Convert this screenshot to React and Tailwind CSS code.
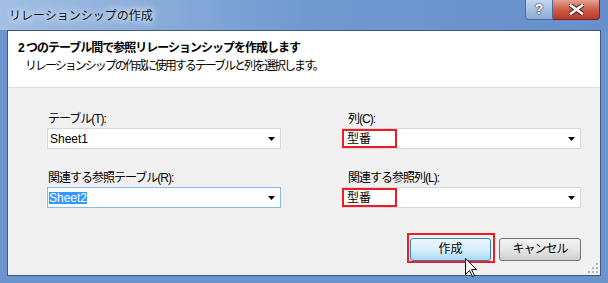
const ui = "font-['Liberation_Sans','Noto_Sans_CJK_JP',sans-serif]"

function Combo({ value, selected, focused, marked, inset }) {
  return (
    <div
      className={`relative flex items-center h-[21px] bg-white border ${
        focused ? 'border-[#8cbbe8]' : 'border-[#d7d7d7]'
      } ${inset}`}
    >
      {selected ? (
        <span className="bg-[#3399ff] text-white leading-[12px] h-[12px]">{value}</span>
      ) : (
        <span className="leading-[14px]">{value}</span>
      )}
      <svg className="ml-auto mr-[5px]" width="7" height="4" viewBox="0 0 7 4">
        <path d="M0 0h7L3.5 4z" fill="#000" />
      </svg>
      {marked && (
        <span className="absolute left-[-1px] top-0 w-[55px] h-[19px] border-2 border-[#ee1c25]" />
      )}
    </div>
  )
}

function Field({ label, labelInset, ...rest }) {
  return (
    <div className="flex flex-col">
      <div className={`h-[16px] leading-[16px] tracking-[-1px] mb-[1px] ${labelInset}`}>{label}</div>
      <Combo {...rest} />
    </div>
  )
}

export default function App() {
  return (
    <div className={`w-[608px] h-[283px] flex flex-col bg-[#6a94cb] text-[12px] text-black ${ui}`}>
      <div className="h-[30px] flex items-start bg-gradient-to-r from-[#a3c0e4] via-[#7099d0] to-[#6790cb]">
        <div className="pl-[9px] pt-[8px] leading-[16px] text-[12px] text-[#111] [text-shadow:0_0_6px_#fff,0_0_10px_#fff]">
          リレーションシップの作成
        </div>
        <div className="ml-auto mr-[8px] flex">
          <div className="w-[28px] h-[20px] flex items-center justify-center rounded-bl-[4px] border border-[#4c6c97] border-t-0 bg-gradient-to-b from-[#c7d8ee] via-[#a9c1e3] to-[#8aa9d6] text-white font-bold text-[14px] [text-shadow:0_0_1px_#223,0_0_2px_#223]">
            ?
          </div>
          <div className="w-[47px] h-[20px] flex items-center justify-center rounded-br-[4px] border border-[#6b2a22] border-t-0 border-l-0 bg-gradient-to-b from-[#e3a291] via-[#cf5a47] to-[#b9382a]">
            <svg width="15" height="11" viewBox="0 0 15 11">
              <path d="M2 1.5L13 9.5M13 1.5L2 9.5" stroke="#4a1a14" strokeWidth="4.5" strokeLinecap="square" />
              <path d="M2 1.5L13 9.5M13 1.5L2 9.5" stroke="#fff" strokeWidth="2.6" strokeLinecap="square" />
            </svg>
          </div>
        </div>
      </div>

      <div className="mx-[7px] h-[246px] flex flex-col border border-[#3d5a80] bg-[#f0f0f0]">
        <div className="h-[57px] bg-white border-b border-[#dcdcdc] flex flex-col">
          <div className="pl-[10px] pt-[9px] leading-[16px] font-bold tracking-[-1px]">
            2 つのテーブル間で参照リレーションシップを作成します
          </div>
          <div className="pl-[17px] pt-[2px] leading-[16px] tracking-[-2px]">
            リレーションシップの作成に使用するテーブルと列を選択します。
          </div>
        </div>

        <div className="relative flex-1 flex flex-col pt-[23px]">
          <div className="flex pl-[39px]">
            <div className="w-[234px] flex flex-col gap-[21px]">
              <Field label="テーブル(T):" labelInset="pl-[1px]" value="Sheet1" inset="pl-[2px]" />
              <Field label="関連する参照テーブル(R):" labelInset="pl-[1px]" value="Sheet2" inset="pl-[1px]" selected focused />
            </div>
            <div className="ml-[61px] w-[239px] flex flex-col gap-[21px]">
              <Field label="列(C):" labelInset="pl-[6px]" value="型番" inset="pl-[4px]" marked />
              <Field label="関連する参照列(L):" labelInset="pl-[6px]" value="型番" inset="pl-[4px]" marked />
            </div>
          </div>

          <div className="mt-[30px] flex justify-end gap-[8px] pr-[19px]">
            <div className="relative">
              <button className="w-[81px] h-[23px] rounded-[3px] border border-[#3c7fb1] bg-gradient-to-b from-[#eaf6fd] via-[#d9f0fc] to-[#a7d9f5] leading-[21px] text-center">
                作成
              </button>
              <span className="absolute left-[-3px] right-[-4px] top-[-5px] bottom-[-2px] border-2 border-[#ee1c25]" />
              <svg className="absolute left-[55px] top-[20px]" width="12" height="19" viewBox="0 0 12 19">
                <path d="M0.5 0.5V16.5L4.5 12.5L7.5 18.5L9.5 17.5L6.5 11.5H11.5Z" fill="#fff" stroke="#000" />
              </svg>
            </div>
            <button className="w-[82px] h-[23px] rounded-[3px] border border-[#707070] bg-gradient-to-b from-[#f2f2f2] via-[#e6e6e6] to-[#cfcfcf] leading-[21px] text-center tracking-[-1px]">
              キャンセル
            </button>
          </div>

          <svg className="absolute right-[2px] bottom-[2px]" width="10" height="10" viewBox="0 0 10 10">
            <g fill="#b8b8b8">
              <rect x="8" y="0" width="2" height="2" />
              <rect x="4" y="4" width="2" height="2" />
              <rect x="8" y="4" width="2" height="2" />
              <rect x="0" y="8" width="2" height="2" />
              <rect x="4" y="8" width="2" height="2" />
              <rect x="8" y="8" width="2" height="2" />
            </g>
          </svg>
        </div>
      </div>
    </div>
  )
}
